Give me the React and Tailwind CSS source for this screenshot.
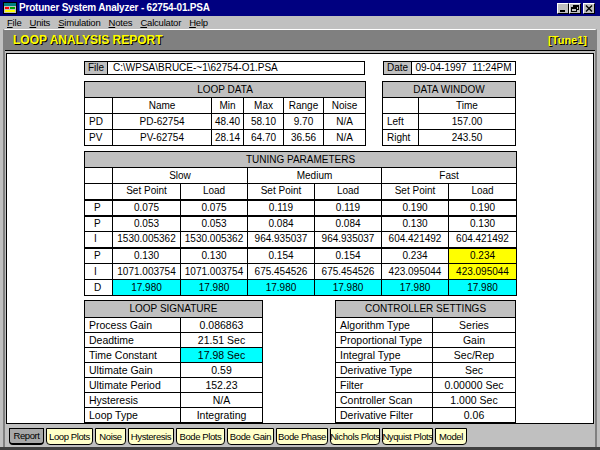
import React from "react";

const FONT = "font-['Liberation_Sans',Arial,sans-serif]";

function TitleIcon() {
  return (
    <svg width="14" height="12" viewBox="0 0 14 12">
      <rect x="0.5" y="0.5" width="13" height="11" fill="#c0c0c0" stroke="#000" />
      <rect x="1" y="1" width="12" height="3" fill="#008080" />
      <rect x="2" y="5" width="4" height="2" fill="#ff0000" />
      <rect x="7" y="5" width="5" height="2" fill="#00a000" />
      <rect x="2" y="8" width="10" height="2" fill="#ffff00" />
    </svg>
  );
}

function CapButton({ children }) {
  return (
    <div className="w-[12px] h-[11px] bg-[#c0c0c0] border border-t-white border-l-white border-r-black border-b-black flex items-center justify-center">
      {children}
    </div>
  );
}

const tabs = [
  { t: "Report", w: "w-[35px]", sel: true },
  { t: "Loop Plots", w: "w-[47px]" },
  { t: "Noise", w: "w-[31px]" },
  { t: "Hysteresis", w: "w-[46px]" },
  { t: "Bode Plots", w: "w-[49px]" },
  { t: "Bode Gain", w: "w-[47px]" },
  { t: "Bode Phase", w: "w-[52px]" },
  { t: "Nichols Plots", w: "w-[50px]" },
  { t: "Nyquist Plots", w: "w-[51px]" },
  { t: "Model", w: "w-[32px]" },
];

const td = "border border-black p-0 h-[16px] leading-none text-center";
const tdL = "border border-black p-0 h-[16px] leading-none text-left pl-[4px]";
const th = "border border-black p-0 h-[16px] leading-none text-center bg-[#c0c0c0] font-normal";

const tuning = [
  { l: "P", v: ["0.075", "0.075", "0.119", "0.119", "0.190", "0.190"], sep: true },
  { l: "P", v: ["0.053", "0.053", "0.084", "0.084", "0.130", "0.130"], sep: true },
  { l: "I", v: ["1530.005362", "1530.005362", "964.935037", "964.935037", "604.421492", "604.421492"] },
  { l: "P", v: ["0.130", "0.130", "0.154", "0.154", "0.234", "0.234"], sep: true, y: [5] },
  { l: "I", v: ["1071.003754", "1071.003754", "675.454526", "675.454526", "423.095044", "423.095044"], y: [5] },
  { l: "D", v: ["17.980", "17.980", "17.980", "17.980", "17.980", "17.980"], cyan: true },
];

const signature = [
  ["Process Gain", "0.086863"],
  ["Deadtime", "21.51 Sec"],
  ["Time Constant", "17.98 Sec", true],
  ["Ultimate Gain", "0.59"],
  ["Ultimate Period", "152.23"],
  ["Hysteresis", "N/A"],
  ["Loop Type", "Integrating"],
];

const controller = [
  ["Algorithm Type", "Series"],
  ["Proportional Type", "Gain"],
  ["Integral Type", "Sec/Rep"],
  ["Derivative Type", "Sec"],
  ["Filter", "0.00000 Sec"],
  ["Controller Scan", "1.000 Sec"],
  ["Derivative Filter", "0.06"],
];

function KVTable({ title, rows, widths }) {
  return (
    <table className="border-collapse table-fixed text-[10px] text-black">
      <colgroup>
        <col className={widths[0]} />
        <col className={widths[1]} />
      </colgroup>
      <thead>
        <tr>
          <th colSpan={2} className="border border-black p-0 h-[17px] leading-none text-center bg-[#c0c0c0] font-normal">{title}</th>
        </tr>
      </thead>
      <tbody>
        {rows.map((r, i) => (
          <tr key={i}>
            <td className="border border-black p-0 h-[15px] leading-none text-left pl-[4px] text-[10.5px]">{r[0]}</td>
            <td className={"border border-black p-0 h-[15px] leading-none text-center text-[10.5px] " + (r[2] ? "bg-[#00ffff]" : "")}>{r[1]}</td>
          </tr>
        ))}
      </tbody>
    </table>
  );
}

export default function App() {
  return (
    <div className={"w-[600px] h-[450px] bg-[#c0c0c0] flex flex-col overflow-hidden " + FONT}>
      {/* Title bar */}
      <div className="h-[16px] bg-[#000080] flex items-center pl-[3px] pr-[5px]">
        <TitleIcon />
        <span className="ml-[2px] text-white font-bold text-[10px] tracking-[-0.2px] leading-none">
          Protuner System Analyzer - 62754-01.PSA
        </span>
        <div className="ml-auto flex items-center">
          <CapButton>
            <svg width="8" height="7" viewBox="0 0 8 7">
              <rect x="1" y="5" width="5" height="2" fill="#000" />
            </svg>
          </CapButton>
          <CapButton>
            <svg width="8" height="7" viewBox="0 0 8 7">
              <rect x="2.5" y="0.5" width="5" height="4" fill="none" stroke="#000" />
              <rect x="2" y="0" width="6" height="2" fill="#000" />
              <rect x="0.5" y="2.5" width="5" height="4" fill="#c0c0c0" stroke="#000" />
              <rect x="0" y="2" width="6" height="2" fill="#000" />
            </svg>
          </CapButton>
          <div className="ml-[2px]">
            <CapButton>
              <svg width="8" height="7" viewBox="0 0 8 7">
                <path d="M1 0.5 L7 6.5 M7 0.5 L1 6.5" stroke="#000" strokeWidth="1.4" />
              </svg>
            </CapButton>
          </div>
        </div>
      </div>

      {/* Menu bar */}
      <div className="h-[13px] flex items-center pl-[7px] gap-[8px] text-[9.5px] leading-none text-black tracking-[-0.2px]">
        <span><u>F</u>ile</span>
        <span><u>U</u>nits</span>
        <span><u>S</u>imulation</span>
        <span><u>N</u>otes</span>
        <span><u>C</u>alculator</span>
        <span><u>H</u>elp</span>
      </div>

      {/* MDI window */}
      <div className="flex-1 ml-[3px] mr-[3px] border-l-2 border-r-2 border-t border-l-[#808080] border-r-[#808080] border-t-white flex flex-col">
        <div className="h-[21px] bg-[#808080] border-b border-b-black flex items-center justify-between px-[8px]">
          <span className="text-[#ffff00] font-bold text-[12px] leading-none [text-shadow:1px_1px_0_#000]">LOOP ANALYSIS REPORT</span>
          <span className="text-[#ffff00] font-bold text-[11px] leading-none [text-shadow:1px_1px_0_#000]">[Tune1]</span>
        </div>
        <div className="h-[2px]" />
        <div className="h-[371px] bg-white border border-black ml-[1px] mr-[1px] flex justify-center pt-[7px] text-[10px] text-black">
          <div className="w-[432px] flex flex-col">
            {/* File / Date row */}
            <div className="flex justify-between h-[18px]">
              <div className="flex">
                <div className="w-[24px] bg-[#c0c0c0] border border-black flex items-center justify-center leading-none">File</div>
                <div className="w-[257px] border border-l-0 border-black flex items-center pl-[5px] leading-none">C:\WPSA\BRUCE-~1\62754-O1.PSA</div>
              </div>
              <div className="flex">
                <div className="w-[29px] bg-[#c0c0c0] border border-black flex items-center justify-center leading-none">Date</div>
                <div className="w-[104px] border border-l-0 border-black flex items-center justify-center leading-none">09-04-1997&nbsp;&nbsp;11:24PM</div>
              </div>
            </div>

            {/* Loop data & data window */}
            <div className="flex justify-between mt-[6px]">
              <table className="border-collapse table-fixed w-[281px]">
                <colgroup>
                  <col className="w-[28px]" />
                  <col className="w-[99px]" />
                  <col className="w-[32px]" />
                  <col className="w-[40px]" />
                  <col className="w-[40px]" />
                  <col className="w-[42px]" />
                </colgroup>
                <thead>
                  <tr><th colSpan={6} className={th}>LOOP DATA</th></tr>
                </thead>
                <tbody>
                  <tr>
                    <td className={td}></td>
                    <td className={td}>Name</td>
                    <td className={td}>Min</td>
                    <td className={td}>Max</td>
                    <td className={td}>Range</td>
                    <td className={td}>Noise</td>
                  </tr>
                  <tr>
                    <td className={tdL}>PD</td>
                    <td className={td}>PD-62754</td>
                    <td className={td}>48.40</td>
                    <td className={td}>58.10</td>
                    <td className={td}>9.70</td>
                    <td className={td}>N/A</td>
                  </tr>
                  <tr>
                    <td className={tdL}>PV</td>
                    <td className={td}>PV-62754</td>
                    <td className={td}>28.14</td>
                    <td className={td}>64.70</td>
                    <td className={td}>36.56</td>
                    <td className={td}>N/A</td>
                  </tr>
                </tbody>
              </table>
              <table className="border-collapse table-fixed w-[133px]">
                <colgroup>
                  <col className="w-[36px]" />
                  <col className="w-[97px]" />
                </colgroup>
                <thead>
                  <tr><th colSpan={2} className={th}>DATA WINDOW</th></tr>
                </thead>
                <tbody>
                  <tr><td className={td}></td><td className={td}>Time</td></tr>
                  <tr><td className={tdL}>Left</td><td className={td}>157.00</td></tr>
                  <tr><td className={tdL}>Right</td><td className={td}>243.50</td></tr>
                </tbody>
              </table>
            </div>

            {/* Tuning parameters */}
            <table className="border-collapse table-fixed w-[432px] mt-[5px]">
              <colgroup>
                <col className="w-[28px]" />
                <col className="w-[68px]" />
                <col className="w-[67px]" />
                <col className="w-[67px]" />
                <col className="w-[67px]" />
                <col className="w-[67px]" />
                <col className="w-[68px]" />
              </colgroup>
              <thead>
                <tr><th colSpan={7} className={th}>TUNING PARAMETERS</th></tr>
              </thead>
              <tbody>
                <tr>
                  <td className={td}></td>
                  <td colSpan={2} className={td}>Slow</td>
                  <td colSpan={2} className={td}>Medium</td>
                  <td colSpan={2} className={td}>Fast</td>
                </tr>
                <tr>
                  <td className={td}></td>
                  <td className={td}>Set Point</td>
                  <td className={td}>Load</td>
                  <td className={td}>Set Point</td>
                  <td className={td}>Load</td>
                  <td className={td}>Set Point</td>
                  <td className={td}>Load</td>
                </tr>
                {tuning.map((r, i) => (
                  <tr key={i}>
                    <td className={(r.sep ? "border-t-2 " : "") + "border border-black p-0 h-[16px] leading-none text-left pl-[9px]"}>{r.l}</td>
                    {r.v.map((v, j) => (
                      <td
                        key={j}
                        className={
                          (r.sep ? "border-t-2 " : "") +
                          "border border-black p-0 h-[16px] leading-none text-center " +
                          (r.cyan ? "bg-[#00ffff]" : r.y && r.y.includes(j) ? "bg-[#ffff00]" : "")
                        }
                      >
                        {v}
                      </td>
                    ))}
                  </tr>
                ))}
              </tbody>
            </table>

            {/* Signature / Controller */}
            <div className="flex justify-between mt-[4px]">
              <KVTable title="LOOP SIGNATURE" rows={signature} widths={["w-[96px]", "w-[82px]"]} />
              <KVTable title="CONTROLLER SETTINGS" rows={controller} widths={["w-[97px]", "w-[83px]"]} />
            </div>
          </div>
        </div>

        {/* Tabs */}
        <div className="flex-1 flex flex-col">
          <div className="h-[4px]" />
          <div className="flex gap-[2px] pl-[4px]">
            {tabs.map((t) => (
              <div
                key={t.t}
                className={
                  t.w +
                  " h-[17px] border border-black rounded-b-[4px] flex items-center justify-center text-[9.5px] leading-none tracking-[-0.4px] whitespace-nowrap " +
                  (t.sel ? "bg-[#a8a8a8] border-b-2" : "bg-[#ffffc8]")
                }
              >
                {t.t}
              </div>
            ))}
          </div>
        </div>
      </div>
      <div className="h-[3px] bg-[#404040]" />
    </div>
  );
}
